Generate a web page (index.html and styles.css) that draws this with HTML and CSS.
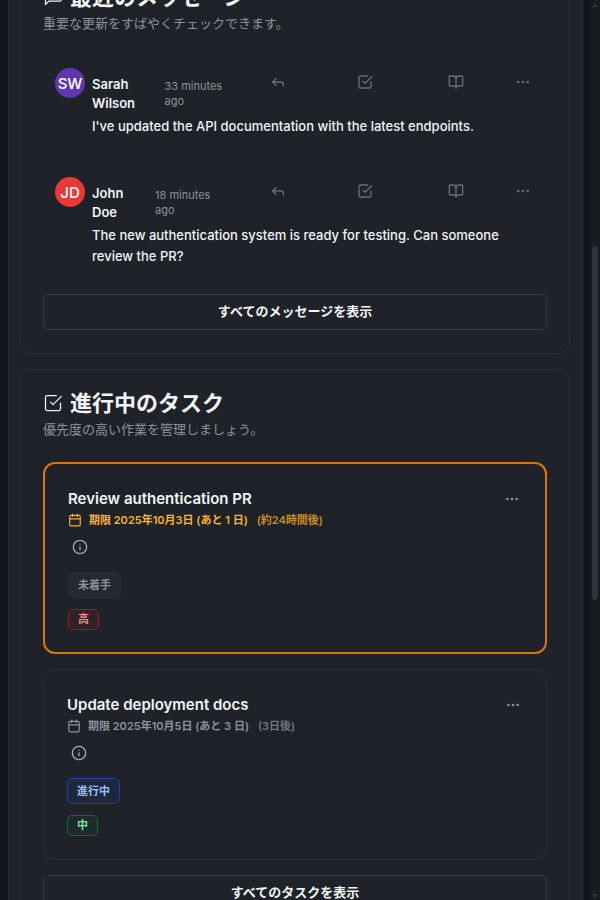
FILE: index.html
```html
<!DOCTYPE html>
<html lang="ja">
<head>
<meta charset="utf-8">
<meta name="viewport" content="width=device-width, initial-scale=1">
<title>ダッシュボード</title>
<link rel="stylesheet" href="styles.css">
</head>
<body>
<svg class="sprite" aria-hidden="true">
  <symbol id="i-message" viewBox="0 0 24 24"><path d="M22 15a2 2 0 0 1-2 2H7l-4 4V5a2 2 0 0 1 2-2h15a2 2 0 0 1 2 2z"/></symbol>
  <symbol id="i-check" viewBox="0 0 24 24"><path d="M9 11l3 3L22 4"/><path d="M21 12v7a2 2 0 0 1-2 2H5a2 2 0 0 1-2-2V5a2 2 0 0 1 2-2h11"/></symbol>
  <symbol id="i-reply" viewBox="0 0 24 24"><path d="M9 17l-5-5 5-5"/><path d="M20 18v-2a4 4 0 0 0-4-4H4"/></symbol>
  <symbol id="i-book" viewBox="0 0 24 24"><path d="M12 7v14"/><path d="M3 18a1 1 0 0 1-1-1V4a1 1 0 0 1 1-1h5a4 4 0 0 1 4 4 4 4 0 0 1 4-4h5a1 1 0 0 1 1 1v13a1 1 0 0 1-1 1h-6a3 3 0 0 0-3 3 3 3 0 0 0-3-3z"/></symbol>
  <symbol id="i-more" viewBox="0 0 24 24"><circle cx="5" cy="12" r="1"/><circle cx="12" cy="12" r="1"/><circle cx="19" cy="12" r="1"/></symbol>
  <symbol id="i-info" viewBox="0 0 24 24"><circle cx="12" cy="12" r="10"/><path d="M12 16v-4"/><path d="M12 8h.01"/></symbol>
  <symbol id="i-calendar" viewBox="0 0 24 24"><path d="M8 2v4M16 2v4M3 10h18"/><rect x="3" y="4" width="18" height="18" rx="2"/></symbol>
</svg>
<main class="shell">
  <section class="card">
    <header class="card-head">
      <h2><svg class="icon icon-lg"><use href="#i-message"/></svg>最近のメッセージ</h2>
      <p>重要な更新をすばやくチェックできます。</p>
    </header>
    <div class="messages">
      <article class="message">
        <span class="avatar avatar-violet">SW</span>
        <div class="message-body">
          <div class="message-head">
            <div class="byline"><strong>Sarah Wilson</strong><time>33 minutes ago</time></div>
            <div class="actions">
              <button class="icon-btn" type="button" aria-label="返信"><svg class="icon"><use href="#i-reply"/></svg></button>
              <button class="icon-btn" type="button" aria-label="タスク化"><svg class="icon"><use href="#i-check"/></svg></button>
              <button class="icon-btn" type="button" aria-label="既読"><svg class="icon"><use href="#i-book"/></svg></button>
              <button class="icon-btn" type="button" aria-label="その他"><svg class="icon"><use href="#i-more"/></svg></button>
            </div>
          </div>
          <p>I've updated the API documentation with the latest endpoints.</p>
        </div>
      </article>
      <article class="message">
        <span class="avatar avatar-red">JD</span>
        <div class="message-body">
          <div class="message-head">
            <div class="byline"><strong>John Doe</strong><time>18 minutes ago</time></div>
            <div class="actions">
              <button class="icon-btn" type="button" aria-label="返信"><svg class="icon"><use href="#i-reply"/></svg></button>
              <button class="icon-btn" type="button" aria-label="タスク化"><svg class="icon"><use href="#i-check"/></svg></button>
              <button class="icon-btn" type="button" aria-label="既読"><svg class="icon"><use href="#i-book"/></svg></button>
              <button class="icon-btn" type="button" aria-label="その他"><svg class="icon"><use href="#i-more"/></svg></button>
            </div>
          </div>
          <p>The new authentication system is ready for testing. Can someone review the PR?</p>
        </div>
      </article>
    </div>
    <button class="wide-btn" type="button">すべてのメッセージを表示</button>
  </section>

  <section class="card">
    <header class="card-head">
      <h2><svg class="icon icon-lg"><use href="#i-check"/></svg>進行中のタスク</h2>
      <p>優先度の高い作業を管理しましょう。</p>
    </header>
    <div class="tasks">
      <article class="task task-urgent">
        <div class="task-head">
          <h3>Review authentication PR</h3>
          <button class="icon-btn" type="button" aria-label="その他"><svg class="icon"><use href="#i-more"/></svg></button>
        </div>
        <p class="due"><svg class="icon icon-sm"><use href="#i-calendar"/></svg><span>期限 2025年10月3日 (あと 1 日)</span><span class="relative">(約24時間後)</span></p>
        <button class="icon-btn info" type="button" aria-label="詳細"><svg class="icon"><use href="#i-info"/></svg></button>
        <div class="badges">
          <span class="badge badge-status">未着手</span>
          <span class="badge badge-high">高</span>
        </div>
      </article>
      <article class="task">
        <div class="task-head">
          <h3>Update deployment docs</h3>
          <button class="icon-btn" type="button" aria-label="その他"><svg class="icon"><use href="#i-more"/></svg></button>
        </div>
        <p class="due"><svg class="icon icon-sm"><use href="#i-calendar"/></svg><span>期限 2025年10月5日 (あと 3 日)</span><span class="relative">(3日後)</span></p>
        <button class="icon-btn info" type="button" aria-label="詳細"><svg class="icon"><use href="#i-info"/></svg></button>
        <div class="badges">
          <span class="badge badge-status badge-active">進行中</span>
          <span class="badge badge-medium">中</span>
        </div>
      </article>
    </div>
    <button class="wide-btn" type="button">すべてのタスクを表示</button>
  </section>
</main>
<div class="scrollbar" aria-hidden="true">
  <span class="arrow arrow-up"></span>
  <span class="before"></span>
  <span class="thumb"></span>
  <span class="after"></span>
  <span class="arrow arrow-down"></span>
</div>
</body>
</html>
```
FILE: styles.css
```css
* { box-sizing: border-box; }

body {
  display: flex;
  gap: 7px;
  height: 100vh;
  margin: 0;
  padding-left: 8px;
  overflow: hidden;
  background: #141519;
  color: #f1f3f5;
  font-family: Inter, "Noto Sans CJK JP", sans-serif;
  font-size: 13px;
}

h2, h3, p { margin: 0; }

button {
  padding: 0;
  border: 0;
  background: none;
  color: inherit;
  font: inherit;
  cursor: pointer;
}

.sprite { position: absolute; width: 0; height: 0; }

.icon {
  flex: none;
  display: block;
  width: 16px;
  height: 16px;
  fill: none;
  stroke: currentColor;
  stroke-width: 2;
  stroke-linecap: round;
  stroke-linejoin: round;
}
.icon-lg { width: 20px; height: 20px; stroke-width: 1.5; }
.icon-sm { width: 14px; height: 14px; }

.shell {
  flex: 1;
  min-width: 0;
  padding: 0 12px 0 11px;
  overflow: hidden;
  border: solid #2a2e36;
  border-width: 0 1px;
  background: #1f2228;
}

.card {
  margin-bottom: 15px;
  padding: 22px 22px 23px;
  border: 1px solid #2a2e36;
  border-radius: 12px;
}

/* The view opens scrolled a little way into the first card. */
.card:first-child { margin-top: -37px; }

.card-head { margin-bottom: 23px; }
.card-head h2 {
  display: flex;
  align-items: center;
  gap: 7px;
  margin-bottom: 5px;
  font-size: 22px;
  line-height: 22px;
  font-weight: 700;
}
.card-head p { color: #8b939d; line-height: 20px; }

.messages { display: grid; gap: 16px; margin-bottom: 15px; }
.message { display: flex; gap: 7px; padding: 12px; }

.avatar {
  flex: none;
  display: grid;
  place-items: center;
  width: 30px;
  height: 30px;
  border-radius: 50%;
  color: #fff;
  font-size: 15px;
  font-weight: 500;
}
.avatar-violet { background: #5f38b0; }
.avatar-red { background: #e53a38; }

.message-body { flex: 1; min-width: 0; }
.message-body p { margin-top: 3px; line-height: 21px; font-weight: 500; }
.message-head { display: flex; align-items: flex-start; }

.byline {
  flex: none;
  display: flex;
  align-items: center;
  gap: 8px;
  width: 135px;
  padding-top: 7px;
  line-height: 19px;
}
.byline strong { font-weight: 600; }
.byline time { color: #8b939d; font-size: 11px; line-height: 15px; }

.actions {
  flex: 1;
  display: grid;
  grid-template-columns: 102fr 74fr 110fr 24px;
  color: #6b6e73;
}

.icon-btn { display: grid; place-items: center; height: 28px; }

.wide-btn {
  display: block;
  width: 100%;
  height: 36px;
  padding-bottom: 4px;
  border: 1px solid #35383c;
  border-radius: 5px;
  font-weight: 600;
}

.tasks { display: grid; gap: 15px; margin-bottom: 15px; }
.task {
  padding: 23px;
  border: 1px solid #2a2e36;
  border-radius: 12px;
}
.task-urgent { padding-bottom: 22px; border: 2px solid #d97706; }

.task-head { display: flex; justify-content: space-between; align-items: center; height: 24px; }
.task-head h3 { font-size: 15px; line-height: 24px; font-weight: 600; }
.task-head .icon-btn { width: 20px; color: #909296; }

.due {
  display: flex;
  align-items: center;
  gap: 7px;
  color: #8b939d;
  font-size: 11px;
  line-height: 18px;
  font-weight: 600;
}
.due .relative { margin-left: 2px; opacity: 0.75; }
.task-urgent .due { color: #fbb324; }

.info { width: 24px; height: 24px; margin: 6px 0 13px; color: #a6a9ae; }

.badges { display: flex; flex-direction: column; align-items: flex-start; gap: 11px; }
.badge {
  padding: 0 9px;
  border: 1px solid;
  border-radius: 5px;
  font-size: 11px;
  line-height: 19px;
  font-weight: 600;
}
.badge-status {
  border-color: #272b31;
  background: #262a30;
  color: #8b939d;
  line-height: 24px;
}
.badge-active { border-color: #1e40af; background: #1f273c; color: #93c5fd; }
.badge-high { border-color: #991b1b; background: #332127; color: #f08c8c; }
.badge-medium { border-color: #166534; background: #1f2b2a; color: #6ee7a0; }

.scrollbar {
  flex: none;
  display: flex;
  flex-direction: column;
  align-items: center;
  width: 10px;
  padding: 3px 0 2px;
  background: #191c1f;
}
.before { flex: 239; }
.thumb { flex: 353; width: 6px; border-radius: 3px; background: #30343c; }
.after { flex: 294; }
.arrow { border: 3px solid transparent; }
.arrow-up { border-top: 0; border-bottom: 4px solid #30343c; }
.arrow-down { border-bottom: 0; border-top: 4px solid #30343c; }
```
